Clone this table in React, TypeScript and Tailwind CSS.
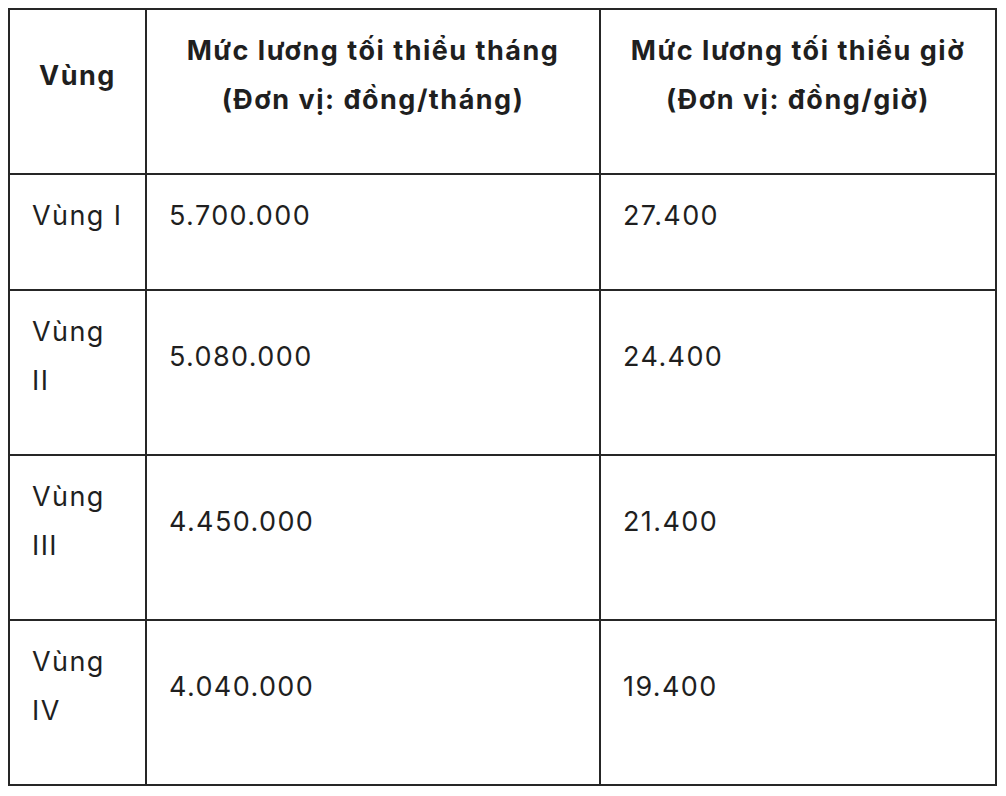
const rows = [
  { region: "Vùng I", month: "5.700.000", hour: "27.400" },
  { region: "Vùng II", month: "5.080.000", hour: "24.400" },
  { region: "Vùng III", month: "4.450.000", hour: "21.400" },
  { region: "Vùng IV", month: "4.040.000", hour: "19.400" },
];

const cell = "flex items-center bg-white px-[22px] pt-[16px] pb-[49px]";
const head = `${cell} justify-center text-center font-bold tracking-[1.5px]`;

export default function App() {
  return (
    <div
      className="min-h-screen bg-white pl-[8px] pt-[8px] text-[27px] leading-[49px] tracking-[1.4px] text-[#1f1f1f]"
      style={{ fontFamily: "Inter, 'Noto Sans', sans-serif" }}
    >
      <div className="grid w-[989px] grid-cols-[135px_452px_394px] gap-[2px] bg-[#262626] p-[2px]">
        <div className={head}>Vùng</div>
        <div className={head}>
          <div>
            Mức lương tối thiểu tháng
            <br />
            (Đơn vị: đồng/tháng)
          </div>
        </div>
        <div className={head}>
          <div>
            Mức lương tối thiểu giờ
            <br />
            (Đơn vị: đồng/giờ)
          </div>
        </div>

        {rows.map((r) => (
          <>
            <div key={r.region} className={cell}>
              {r.region}
            </div>
            <div className={cell}>{r.month}</div>
            <div className={cell}>{r.hour}</div>
          </>
        ))}
      </div>
    </div>
  );
}
